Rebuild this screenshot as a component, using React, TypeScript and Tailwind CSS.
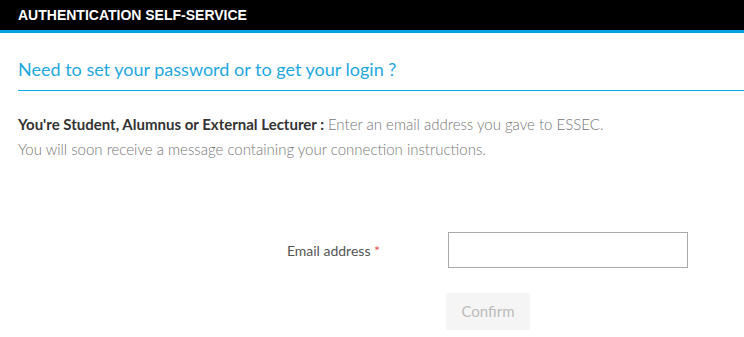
export default function App() {
  return (
    <div className="w-[744px] h-[337px] bg-white overflow-hidden font-['Lato','Noto_Sans',sans-serif]">
      {/* top bar */}
      <header className="h-[30px] bg-black flex items-center px-[18px] border-b-[3px] border-b-[#00a3e0] box-content">
        <span className="text-white font-bold text-[14px] font-['Liberation_Sans',Arial,sans-serif] leading-none">
          AUTHENTICATION SELF-SERVICE
        </span>
      </header>

      <main className="pl-[18px]">
        <h1 className="mt-[24px] pb-[9px] text-[18px] leading-[24px] text-[#1fa8e0] font-normal">
          Need to set your password or to get your login ?
        </h1>
        <div className="h-px bg-[#00ade6]" />

        <div className="mt-[21px] text-[15px] leading-[25px]">
          <p>
            <span className="font-bold text-[#333]">
              You're Student, Alumnus or External Lecturer :
            </span>{" "}
            <span className="font-light text-[#777]">
              Enter an email address you gave to ESSEC.
            </span>
          </p>
          <p className="font-light text-[#777]">
            You will soon receive a message containing your connection
            instructions.
          </p>
        </div>

        <form className="mt-[70px]" onSubmit={(e) => e.preventDefault()}>
          <div className="flex items-center">
            <label className="w-[362px] text-right text-[14px] text-[#555]">
              Email address <span className="text-[#e05050]">*</span>
            </label>
            <input
              type="email"
              className="ml-[68px] w-[240px] h-[36px] border border-[#aaa] outline-none px-2"
            />
          </div>
          <div className="mt-[25px] pl-[428px]">
            <button
              type="submit"
              className="w-[84px] h-[37px] bg-[#f5f5f5] text-[#bbb] text-[15px]"
            >
              Confirm
            </button>
          </div>
        </form>
      </main>
    </div>
  );
}
